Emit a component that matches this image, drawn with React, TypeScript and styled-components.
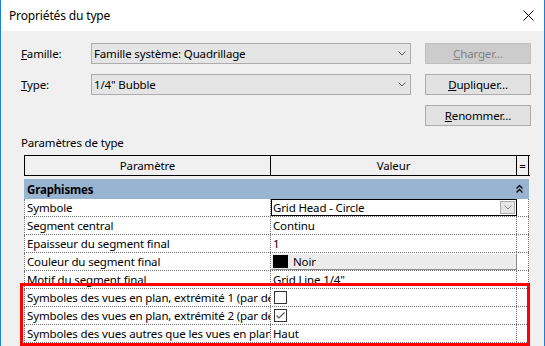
import styled, { createGlobalStyle } from "styled-components";

const GlobalStyle = createGlobalStyle`
  html, body {
    margin: 0;
    padding: 0;
    background: #f0f0f0;
  }
  body {
    font-family: "Noto Sans", "Segoe UI", sans-serif;
    font-size: 11.5px;
    letter-spacing: -0.15px;
    color: #000;
    overflow: hidden;
  }
  * {
    box-sizing: border-box;
  }
`;

const Window = styled.div`
  width: 545px;
  height: 346px;
  border-left: 1px solid #1a7fd6;
  border-right: 1px solid #1a7fd6;
  background: #f0f0f0;
  display: flex;
  flex-direction: column;
  overflow: hidden;
`;

const TitleBar = styled.div`
  height: 31px;
  flex: none;
  background: #fff;
  display: flex;
  align-items: center;
  justify-content: space-between;
  padding: 0 10px 0 8px;
  font-size: 12px;
`;

const Body = styled.div`
  padding: 12px 0 0 20px;
  display: flex;
  flex-direction: column;
`;

const FormGrid = styled.div`
  display: grid;
  grid-template-columns: 56px 320px 106px;
  grid-auto-rows: 21px;
  column-gap: 14px;
  row-gap: 10px;
  align-items: center;
`;

const Label = styled.div`
  line-height: 21px;
`;

const Combo = styled.div`
  height: 21px;
  background: #e5e5e5;
  border: 1px solid #acacac;
  display: flex;
  align-items: center;
  justify-content: space-between;
  padding: 0 4px 0 2px;
`;

const Button = styled.div<{ $disabled?: boolean }>`
  grid-column: 3;
  height: 21px;
  border: 1px solid ${(p) => (p.$disabled ? "#bfbfbf" : "#adadad")};
  background: ${(p) => (p.$disabled ? "#cccccc" : "#e1e1e1")};
  color: ${(p) => (p.$disabled ? "#838383" : "#000")};
  display: flex;
  align-items: center;
  justify-content: center;
`;

const Key = styled.span`
  text-decoration: underline;
`;

const SectionLabel = styled.div`
  margin-top: 9px;
  line-height: 16px;
`;

const Table = styled.div`
  margin: 4px 0 0 3px;
  width: 506px;
  display: flex;
  flex-direction: column;
`;

const HeaderRow = styled.div`
  display: grid;
  grid-template-columns: 246px 246px 12px;
  height: 21px;
  border: 1px solid #000;
  border-right: none;
  background: #f0f0f0;
`;

const HeaderCell = styled.div`
  border-right: 1px solid #000;
  display: flex;
  align-items: center;
  justify-content: center;
`;

const GroupRow = styled.div`
  margin-top: 3px;
  height: 20px;
  width: 505px;
  background: #99b4d1;
  display: flex;
  align-items: center;
  justify-content: space-between;
  padding: 0 6px 0 3px;
  font-weight: bold;
`;

const Row = styled.div`
  display: grid;
  grid-template-columns: 246px 246px 12px;
  height: 18px;
  width: 505px;
  background: #fff;
  border-left: 1px dotted #707070;
  border-bottom: 1px dotted #707070;
`;

const Cell = styled.div<{ $flush?: boolean }>`
  border-right: ${(p) => (p.$flush ? "none" : "1px dotted #707070")};
  padding: 0 ${(p) => (p.$flush ? "0" : "2px")};
  white-space: nowrap;
  overflow: hidden;
  line-height: 17px;
  display: flex;
  align-items: center;
`;

const CellCombo = styled.div`
  width: 100%;
  height: 17px;
  border: 1px solid #000;
  display: flex;
  align-items: center;
  justify-content: space-between;
  padding: 0 1px 0 1px;
`;

const DropButton = styled.div`
  width: 15px;
  height: 13px;
  background: #e6e6e6;
  border: 1px solid #acacac;
  display: flex;
  align-items: center;
  justify-content: center;
`;

const ColorButton = styled.div`
  width: 100%;
  height: 17px;
  background: #ececec;
  border: 1px solid #f8f8f8;
  border-right-color: #8a8a8a;
  border-bottom-color: #8a8a8a;
  display: flex;
  align-items: center;
  gap: 5px;
  padding-left: 1px;
`;

const Swatch = styled.div`
  width: 15px;
  height: 13px;
  background: #000;
`;

const Checkbox = styled.div`
  width: 13px;
  height: 13px;
  margin-left: 1px;
  border: 1px solid #333;
  background: #fff;
  display: flex;
  align-items: center;
  justify-content: center;
`;

const Highlight = styled.div`
  position: relative;
  display: flex;
  flex-direction: column;

  &::after {
    content: "";
    position: absolute;
    top: -6px;
    left: -4px;
    right: 0;
    bottom: -3px;
    border: 3px solid #f00;
    pointer-events: none;
  }
`;

const Chevron = ({ color = "#5a5a5a" }: { color?: string }) => (
  <svg width="8" height="5" viewBox="0 0 8 5">
    <path d="M0.5 0.5 L4 4 L7.5 0.5" fill="none" stroke={color} strokeWidth="1" />
  </svg>
);

const CloseIcon = () => (
  <svg width="11" height="11" viewBox="0 0 11 11">
    <path d="M0.5 0.5 L10.5 10.5 M10.5 0.5 L0.5 10.5" stroke="#000" strokeWidth="1" />
  </svg>
);

const CollapseIcon = () => (
  <svg width="7" height="8" viewBox="0 0 7 8">
    <path d="M0.5 3.5 L3.5 0.5 L6.5 3.5 M0.5 7.5 L3.5 4.5 L6.5 7.5" fill="none" stroke="#000" strokeWidth="1.3" />
  </svg>
);

const CheckMark = () => (
  <svg width="11" height="11" viewBox="0 0 11 11">
    <path d="M1.5 5.5 L4 8 L9.5 2.5" fill="none" stroke="#555" strokeWidth="1.2" />
  </svg>
);

type Param = { name: string; value: React.ReactNode; flush?: boolean };

const params: Param[] = [
  {
    name: "Symbole",
    flush: true,
    value: (
      <CellCombo>
        <span>Grid Head - Circle</span>
        <DropButton>
          <Chevron color="#888" />
        </DropButton>
      </CellCombo>
    ),
  },
  { name: "Segment central", value: "Continu" },
  { name: "Epaisseur du segment final", value: "1" },
  {
    name: "Couleur du segment final",
    flush: true,
    value: (
      <ColorButton>
        <Swatch />
        Noir
      </ColorButton>
    ),
  },
  { name: "Motif du segment final", value: "Grid Line 1/4\"" },
];

const marked: Param[] = [
  {
    name: "Symboles des vues en plan, extrémité 1 (par défaut)",
    value: <Checkbox />,
  },
  {
    name: "Symboles des vues en plan, extrémité 2 (par défaut)",
    value: (
      <Checkbox>
        <CheckMark />
      </Checkbox>
    ),
  },
  { name: "Symboles des vues autres que les vues en plan", value: "Haut" },
];

const ParamRow = ({ p }: { p: Param }) => (
  <Row>
    <Cell>{p.name}</Cell>
    <Cell $flush={p.flush}>{p.value}</Cell>
    <Cell />
  </Row>
);

export default function App() {
  return (
    <>
      <GlobalStyle />
      <Window>
        <TitleBar>
          <span>Propriétés du type</span>
          <CloseIcon />
        </TitleBar>
        <Body>
          <FormGrid>
            <Label>
              <Key>F</Key>amille:
            </Label>
            <Combo>
              <span>Famille système: Quadrillage</span>
              <Chevron />
            </Combo>
            <Button $disabled>
              <Key>C</Key>harger…
            </Button>
            <Label>
              <Key>T</Key>ype:
            </Label>
            <Combo>
              <span>1/4" Bubble</span>
              <Chevron />
            </Combo>
            <Button>
              <Key>D</Key>upliquer…
            </Button>
            <Button>
              <Key>R</Key>enommer…
            </Button>
          </FormGrid>
          <SectionLabel>Paramètres de type</SectionLabel>
          <Table>
            <HeaderRow>
              <HeaderCell>Paramètre</HeaderCell>
              <HeaderCell>Valeur</HeaderCell>
              <HeaderCell>=</HeaderCell>
            </HeaderRow>
            <GroupRow>
              <span>Graphismes</span>
              <CollapseIcon />
            </GroupRow>
            {params.map((p) => (
              <ParamRow key={p.name} p={p} />
            ))}
            <Highlight>
              {marked.map((p) => (
                <ParamRow key={p.name} p={p} />
              ))}
            </Highlight>
          </Table>
        </Body>
      </Window>
    </>
  );
}
